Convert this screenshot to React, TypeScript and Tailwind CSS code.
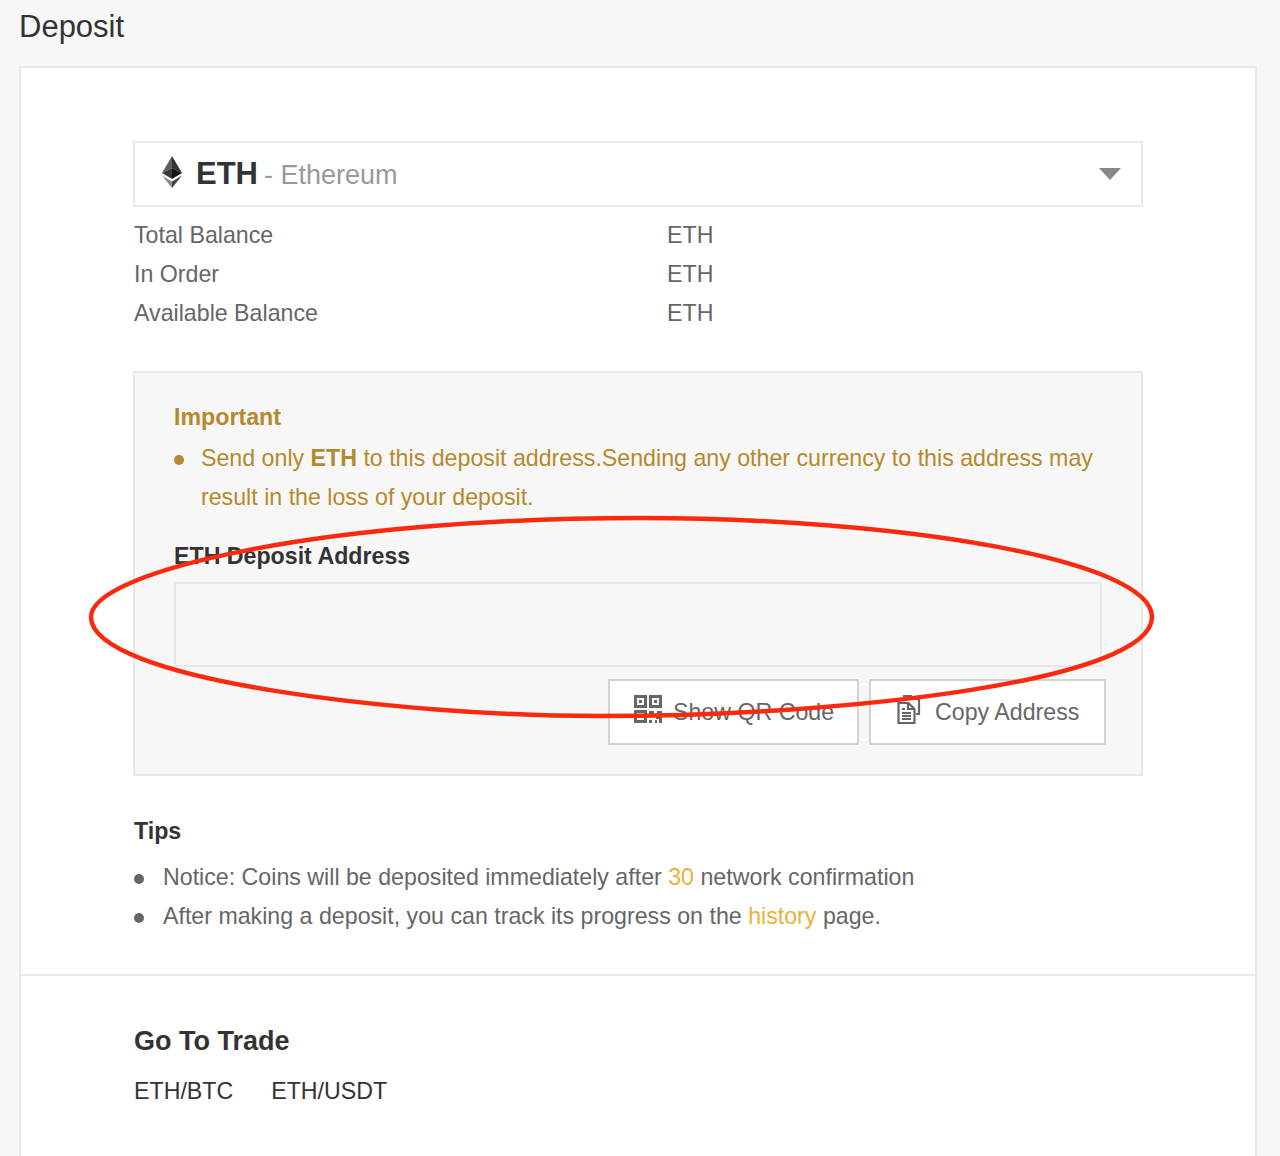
import React from "react";

function EthLogo() {
  return (
    <svg width="22" height="32" viewBox="0 0 22 32" className="-mt-[4px] shrink-0">
      <polygon points="11,0 11,12 1,17" fill="#5f5f5f" />
      <polygon points="11,0 11,12 21,17" fill="#333333" />
      <polygon points="1,17 11,12 11,23" fill="#3a3a3a" />
      <polygon points="21,17 11,12 11,23" fill="#151515" />
      <polygon points="1,19.5 11,25.4 11,32" fill="#8a8a8a" />
      <polygon points="21,19.5 11,25.4 11,32" fill="#444444" />
    </svg>
  );
}

function QrIcon() {
  return (
    <svg width="28" height="28" viewBox="0 0 28 28" className="-mt-[6px] shrink-0" fill="none" stroke="#666" strokeWidth="3">
      <rect x="1.5" y="1.5" width="10" height="10" />
      <rect x="16.5" y="1.5" width="10" height="10" />
      <rect x="1.5" y="16.5" width="10" height="10" />
      <rect x="5" y="5" width="3" height="3" fill="#666" stroke="none" />
      <rect x="20" y="5" width="3" height="3" fill="#666" stroke="none" />
      <rect x="5" y="20" width="3" height="3" fill="#666" stroke="none" />
      <path d="M15 17.5h5M23 17.5h5M15 26.5h3M22 22.5h3M26.5 17v11M21 26.5h2" />
    </svg>
  );
}

function CopyIcon() {
  return (
    <svg width="24" height="29" viewBox="0 0 24 29" className="-mt-[6px] shrink-0" fill="none" stroke="#666" strokeWidth="2.2">
      <path d="M7 2V1h8M19 4h3v15h-3" />
      <path d="M1.5 8h10l6 6v14h-16z" />
      <path d="M11 8v6h6" />
      <path d="M5 14h3M5 18h9M5 21h9M5 24h9" />
    </svg>
  );
}

export default function App() {
  return (
    <div className="relative h-[1156px] overflow-hidden bg-[#f7f7f7] px-[24px] font-['Liberation_Sans',Arial,sans-serif] text-[23.2px] text-[#666]">
      <h1 className="-ml-[5px] h-[66px] pt-[6px] text-[31px] leading-[42px] text-[#333]">Deposit</h1>
      <div className="-ml-[5px] w-[1238px] border-2 border-[#e8e8e8] bg-white">
        <div className="px-[112px] pt-[73px]">
          <div className="flex h-[66px] w-[1010px] items-center border-2 border-[#e8e8e8] pl-[26px] pr-[20px]">
            <EthLogo />
            <span className="ml-[13px] text-[31px] font-bold text-[#333]">ETH</span>
            <span className="ml-[6px] mt-[2px] text-[27px] text-[#999]">- Ethereum</span>
            <span className="ml-auto h-0 w-0 border-x-[11px] border-t-[12px] border-x-transparent border-t-[#888]" />
          </div>
          <div className="mt-[9px] grid w-[1010px] grid-cols-[534px_1fr] pl-[1px] leading-[39px]">
            <span>Total Balance</span>
            <span className="-ml-[1px]">ETH</span>
            <span>In Order</span>
            <span className="-ml-[1px]">ETH</span>
            <span>Available Balance</span>
            <span className="-ml-[1px]">ETH</span>
          </div>
          <div className="mt-[38px] h-[405px] w-[1010px] border-2 border-[#e8e8e8] bg-[#f7f7f7] pl-[39px] pt-[25px]">
            <div className="font-bold leading-[39px] text-[#b5892c]">Important</div>
            <div className="mt-[2px] flex w-[930px] leading-[39px] text-[#b5892c]">
              <span className="mr-[17px] mt-[16px] h-[10px] w-[10px] shrink-0 rounded-full bg-[#b5892c]" />
              <p>
                Send only <b>ETH</b> to this deposit address.Sending any other currency to this address may result in
                the loss of your deposit.
              </p>
            </div>
            <div className="mt-[20px] font-bold leading-[39px] text-[#333]">ETH Deposit Address</div>
            <div className="mt-[6px] h-[85px] w-[928px] border-2 border-[#e8e8e8]" />
            <div className="mt-[12px] flex w-[932px] justify-end gap-[10px]">
              <button className="flex h-[66px] w-[251px] items-center gap-[11px] border-2 border-[#d2d2d2] bg-white pl-[24px] text-[#666]">
                <QrIcon />
                Show QR Code
              </button>
              <button className="flex h-[66px] w-[237px] items-center gap-[14px] border-2 border-[#d2d2d2] bg-white pl-[26px] text-[#666]">
                <CopyIcon />
                Copy Address
              </button>
            </div>
          </div>
          <div className="mt-[36px] pl-[1px] font-bold leading-[39px] text-[#333]">Tips</div>
          <ul className="mt-[7px] pl-[1px] leading-[39px]">
            <li className="flex items-center">
              <span className="mr-[19px] mt-[3px] h-[10px] w-[10px] rounded-full bg-[#666]" />
              <span>
                Notice: Coins will be deposited immediately after <span className="text-[#e8b23a]">30</span> network
                confirmation
              </span>
            </li>
            <li className="flex items-center">
              <span className="mr-[19px] mt-[3px] h-[10px] w-[10px] rounded-full bg-[#666]" />
              <span>
                After making a deposit, you can track its progress on the <span className="text-[#e8b23a]">history</span>{" "}
                page.
              </span>
            </li>
          </ul>
        </div>
        <div className="mt-[38px] border-t-2 border-[#e8e8e8] px-[113px] pt-[46px]">
          <h2 className="text-[27px] font-bold leading-[38px] text-[#333]">Go To Trade</h2>
          <div className="mt-[12px] flex gap-[38px] leading-[39px] text-[#333]">
            <span>ETH/BTC</span>
            <span>ETH/USDT</span>
          </div>
          <div className="h-[60px]" />
        </div>
      </div>
      <svg className="pointer-events-none absolute left-0 top-0" width="1280" height="1156" fill="none">
        <path
          d="M91 617 C91 570 330 518 640 518 C900 518 1152 560 1152 617 C1152 680 850 716 600 716 C400 716 91 680 91 617 Z"
          stroke="#fa2a10"
          strokeWidth="4.5"
        />
      </svg>
    </div>
  );
}
